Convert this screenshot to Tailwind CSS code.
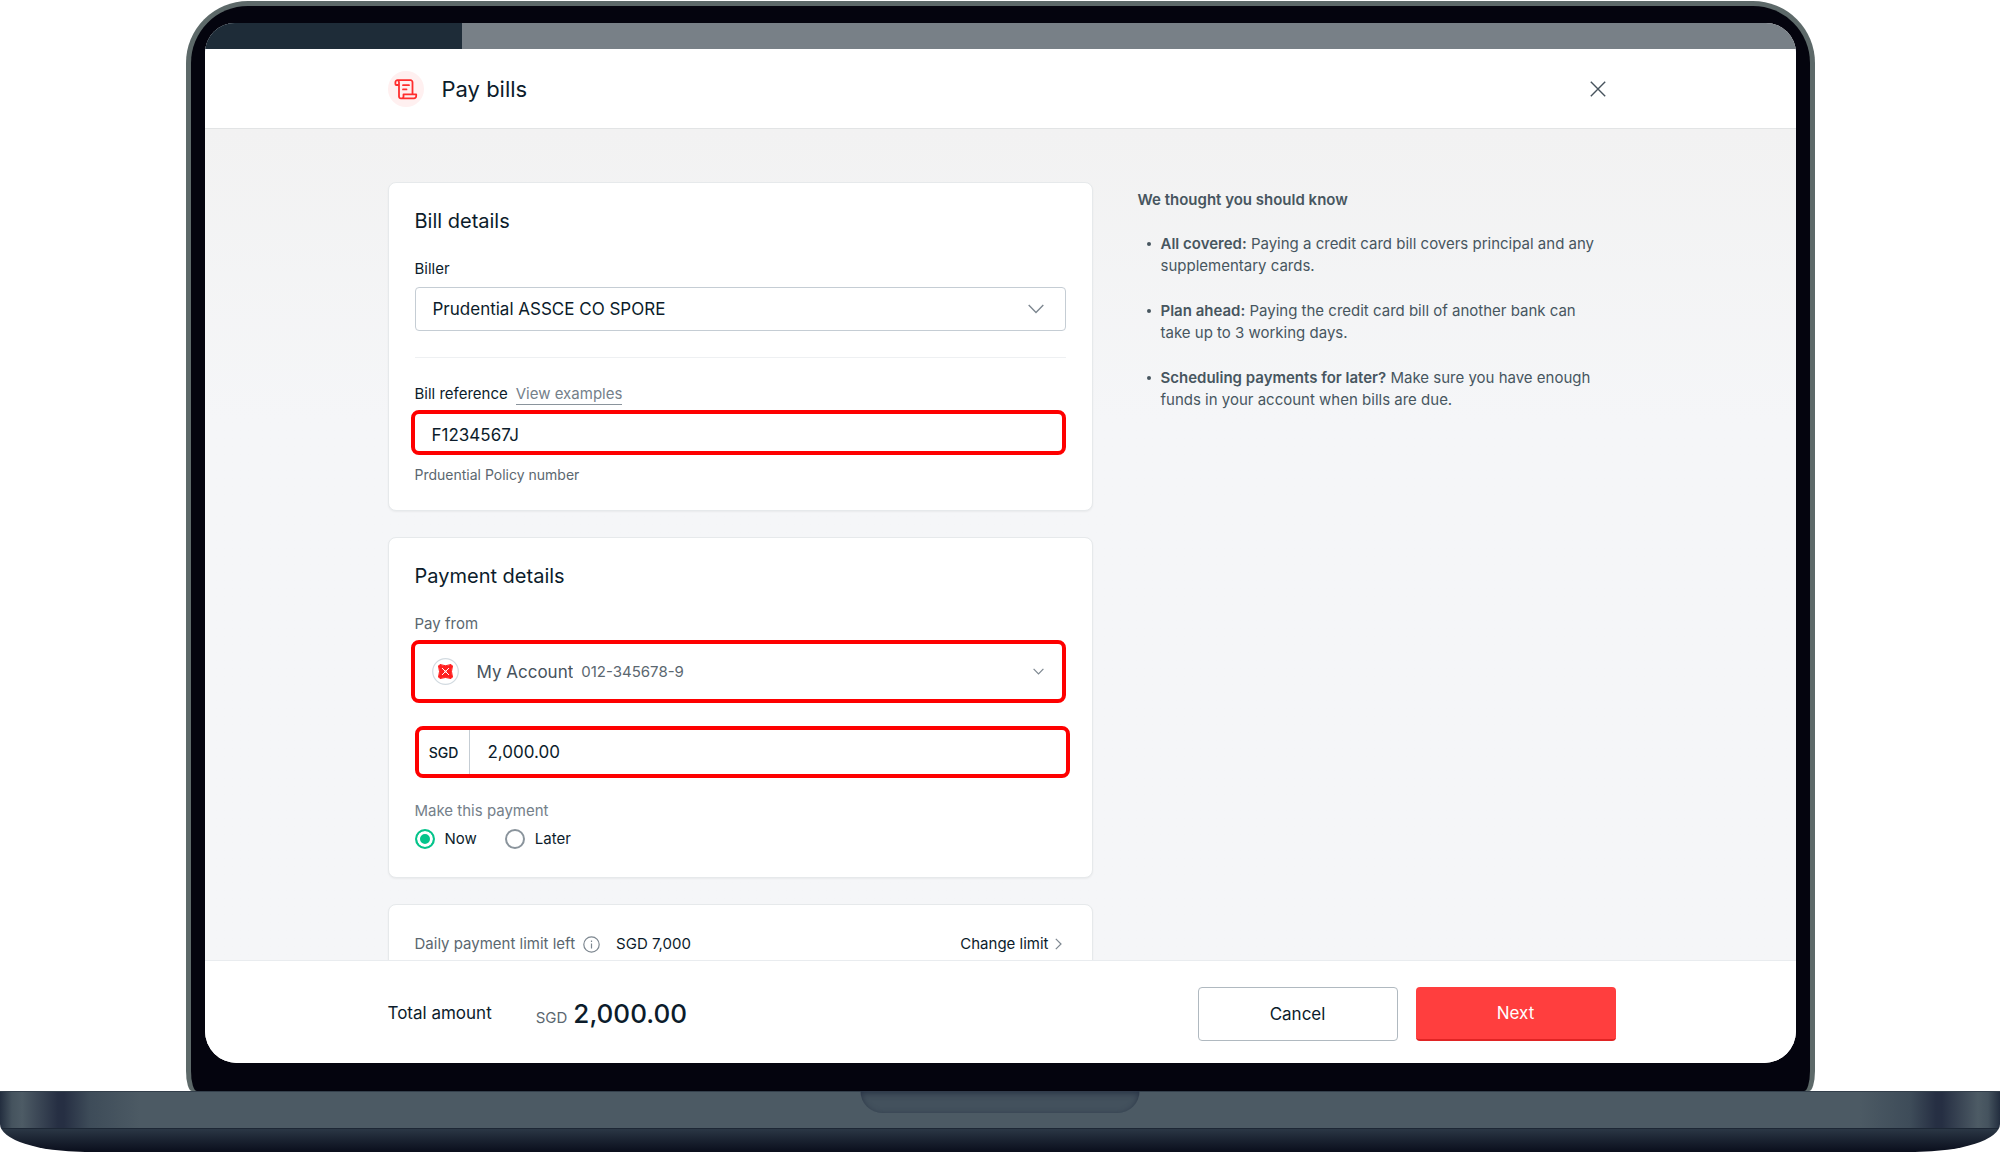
<!DOCTYPE html>
<html lang="en">
<head>
  <meta charset="UTF-8"/>
  <meta name="viewport" content="width=device-width, initial-scale=1.0"/>
  <title>Pay bills</title>
  <!-- TailwindCSS -->
  <script src="https://cdn.jsdelivr.net/npm/@tailwindcss/browser@4"></script>
</head>
<body class="bg-white text-[#0c1c2b] font-['Inter','Liberation_Sans',sans-serif]">
<div class="h-screen flex flex-col overflow-hidden">

  <!-- Laptop lid -->
  <div class="flex-1 min-h-0 ml-[186px] mr-[185px] mt-px px-[5px] pt-[5px] rounded-t-[62px] rounded-b-[6px_20px] bg-[#5d6969]">
    <div class="h-full rounded-t-[57px] rounded-b-[6px_20px] bg-[#04040e] px-[14px] pt-[17px] pb-7">

      <!-- Screen -->
      <div class="h-full flex flex-col overflow-hidden rounded-t-[30px] rounded-b-[32px] bg-white">
        <div class="h-[26px] shrink-0 flex bg-[#788087]">
          <div class="w-[257px] bg-[#1e2c38]"></div>
        </div>

        <!-- Header -->
        <header class="h-[80px] shrink-0 border-b border-[#e2e4e5] bg-white">
          <div class="h-full w-full max-w-[1230px] pl-0.5 mx-auto flex items-center">
            <span class="size-9 rounded-full bg-[#fff0f0] flex items-center justify-center">
              <svg class="size-6" viewBox="0 0 24 24" fill="none" stroke="#ff2d2d" stroke-width="1.8" stroke-linecap="round" stroke-linejoin="round">
                <path d="M5 8H2.4A1 1 0 0 1 1.400 7V5.200A2 2 0 0 1 3.400 3.200H16.500A2 2 0 0 1 18.500 5.200V16.500M3.400 3.200A2 2 0 0 1 5 5.200V19.500A1.800 1.800 0 0 0 6.800 21.300H20A2.200 2.200 0 0 0 22.200 19V17.300H9.500V19.500A1.800 1.800 0 0 1 7.700 21.300M9 8.200H15M9 12.400H12.500"/>
              </svg>
            </span>
            <h1 class="ml-[18px] text-[22px] leading-7">Pay bills</h1>
            <button type="button" aria-label="Close" class="ml-auto size-9 flex items-center justify-center">
              <svg class="size-4" viewBox="0 0 16 16" fill="none" stroke="#47535d" stroke-width="1.4"><path d="M.8.8l14.400 14.400M15.200.8L.8 15.200"/></svg>
            </button>
          </div>
        </header>

        <!-- Content -->
        <main class="flex-1 min-h-0 overflow-hidden bg-linear-to-b from-[#f2f2f2] to-[#f5f6f8] to-35%">
          <div class="w-full max-w-[1230px] pl-0.5 mx-auto pt-[53px] flex gap-[45px]">
            <form id="pay" class="w-[705px] shrink-0 flex flex-col gap-[26px]">

              <section class="bg-white border border-[#e6e9eb] shadow-xs rounded-lg px-[26px] pt-6 pb-[23px]">
                <h2 class="text-[20px] leading-7">Bill details</h2>
                <label for="biller" class="block mt-[22px] text-[15px] leading-6">Biller</label>
                <div class="relative mt-1.5">
                  <select id="biller" class="w-full h-11 appearance-none border border-[#c5cdd4] rounded-sm pl-[17px] pt-0.5 text-[17px]">
                    <option>Prudential ASSCE CO SPORE</option>
                  </select>
                  <svg class="absolute right-[22px] top-[17px] w-4 h-[10px] pointer-events-none" viewBox="0 0 16 10" fill="none" stroke="#7d8790" stroke-width="1.4"><path d="M.7 1L8 8.500 15.300 1"/></svg>
                </div>
                <hr class="mt-[26px] border-[#eef0f2]">
                <div class="mt-6 flex items-center gap-2 text-[15px] leading-6">
                  <label for="ref">Bill reference</label>
                  <a href="#examples" class="text-[#74808a] border-b border-[#8a949c] leading-5">View examples</a>
                </div>
                <input id="ref" type="text" value="F1234567J" class="block mt-1 -ml-1 w-[calc(100%+4px)] h-[45px] border-4 border-[#fe0000] rounded-lg pl-[17px] pt-1 text-[17px]">
                <p class="mt-2 text-[14px] leading-6 text-[#5b6770]">Prduential Policy number</p>
              </section>

              <section class="bg-white border border-[#e6e9eb] shadow-xs rounded-lg px-[26px] pt-6 pb-[26px]">
                <h2 class="text-[20px] leading-7">Payment details</h2>
                <label for="account" class="block mt-[22px] text-[15px] leading-6 text-[#5b6770]">Pay from</label>
                <div class="mt-1 -ml-1 h-[63px] flex items-center border-4 border-[#fe0000] rounded-lg pl-[17px] pr-[18px] text-[#47535d]">
                  <svg class="size-[27px]" viewBox="0 0 27 27">
                    <circle cx="13.500" cy="13.500" r="12.800" fill="#fff" stroke="#d3dbe1" stroke-width="1.200"/>
                    <path d="M8 6.500Q13.500 9 19 6.500L20.500 8Q18.500 13.500 20.500 19L19 20.500Q13.500 18.500 8 20.500L6.500 19Q8.500 13.500 6.500 8Z" fill="#ff1f1f" stroke="#ff1f1f" stroke-linejoin="round"/>
                    <path d="M10 10l7 7M17 10l-7 7" stroke="#fff" stroke-width="1"/>
                    <circle cx="13.500" cy="13.500" r="1" fill="#fff"/>
                  </svg>
                  <select id="account" class="appearance-none field-sizing-content ml-[18px] pt-0.5 text-[17px]">
                    <option>My Account</option>
                  </select>
                  <span class="ml-2 pt-0.5 text-[15px] text-[#5b6770]">012-345678-9</span>
                  <svg class="ml-auto w-[11px] h-[7px]" viewBox="0 0 11 7" fill="none" stroke="#7d8790" stroke-width="1.200"><path d="M.6.8L5.500 5.800 10.400.8"/></svg>
                </div>
                <div class="mt-[23px] -mr-1 h-[52px] flex border-4 border-[#fe0000] rounded-lg">
                  <label for="amount" class="w-[51px] flex items-center justify-center border-r border-[#c5cdd4] text-[14px] font-medium">SGD</label>
                  <input id="amount" type="text" value="2,000.00" class="flex-1 min-w-0 pl-[18px] pt-0.5 text-[17px]">
                </div>
                <fieldset class="mt-[21px] text-[15px] leading-6">
                  <legend class="text-[#74808a]">Make this payment</legend>
                  <div class="mt-1 flex gap-7">
                    <label class="flex items-center gap-2.5">
                      <input type="radio" name="when" checked class="appearance-none size-5 rounded-full border-2 border-[#8a949c] checked:border-[#05c48b] checked:bg-[#05c48b] checked:shadow-[inset_0_0_0_3px_white]">
                      Now
                    </label>
                    <label class="flex items-center gap-2.5">
                      <input type="radio" name="when" class="appearance-none size-5 rounded-full border-2 border-[#8a949c] checked:border-[#05c48b] checked:bg-[#05c48b] checked:shadow-[inset_0_0_0_3px_white]">
                      Later
                    </label>
                  </div>
                </fieldset>
              </section>

              <section class="bg-white border border-[#e6e9eb] shadow-xs rounded-lg px-[26px] pt-[27px] pb-7">
                <div class="flex items-center text-[15px] leading-6">
                  <span class="text-[#5b6770]">Daily payment limit left</span>
                  <svg class="ml-2 size-[17px]" viewBox="0 0 17 17" fill="none" stroke="#7d8790" stroke-width="1.200"><circle cx="8.500" cy="8.500" r="7.700"/><path d="M8.500 7.500v5M8.500 4.500v1.400"/></svg>
                  <span class="ml-4">SGD 7,000</span>
                  <a href="#limit" class="ml-auto mr-1 flex items-center gap-1.5">Change limit
                    <svg class="w-[7px] h-3" viewBox="0 0 7 12" fill="none" stroke="#7d8790" stroke-width="1.200"><path d="M.8.8L6 6 .8 11.200"/></svg>
                  </a>
                </div>
              </section>
            </form>

            <!-- Tips -->
            <aside class="flex-1 mt-[7px] text-[15px] leading-[22px] text-[#47565f]">
              <h3 class="font-semibold">We thought you should know</h3>
              <ul class="mt-[22px] ml-[23px] w-[440px] flex flex-col gap-[23px]">
                <li class="relative before:absolute before:-left-[14px] before:top-[9px] before:size-1 before:rounded-full before:bg-[#47565f]"><b class="font-semibold">All covered:</b> Paying a credit card bill covers principal and any<br>supplementary cards.</li>
                <li class="relative before:absolute before:-left-[14px] before:top-[9px] before:size-1 before:rounded-full before:bg-[#47565f]"><b class="font-semibold">Plan ahead:</b> Paying the credit card bill of another bank can<br>take up to 3 working days.</li>
                <li class="relative before:absolute before:-left-[14px] before:top-[9px] before:size-1 before:rounded-full before:bg-[#47565f]"><b class="font-semibold">Scheduling payments for later?</b> Make sure you have enough<br>funds in your account when bills are due.</li>
              </ul>
            </aside>
          </div>
        </main>

        <!-- Footer -->
        <footer class="shrink-0 border-t border-[#e9ecef] bg-white pt-[26px] pb-[22px]">
          <div class="w-full max-w-[1230px] pl-0.5 mx-auto flex items-center">
            <span class="text-[17px]">Total amount</span>
            <p class="ml-11 flex items-baseline gap-1.5">
              <span class="text-[15px] text-[#5b6770]">SGD</span>
              <strong class="text-[26px] leading-8 font-medium">2,000.00</strong>
            </p>
            <button type="button" class="ml-auto w-[200px] h-[54px] border border-[#b0b9c0] rounded-sm pt-0.5 text-[17px]">Cancel</button>
            <button type="submit" form="pay" class="ml-[18px] w-[200px] h-[54px] rounded-sm bg-[#ff3e3e] border-b-2 border-[#e02424] pt-0.5 text-[17px] text-white">Next</button>
          </div>
        </footer>
      </div>
    </div>
  </div>

  <!-- Laptop base -->
  <div class="h-[61px] shrink-0 relative overflow-hidden rounded-b-[85px_28px]">
    <div class="h-[37px] border-t border-[#333f4b] bg-[linear-gradient(90deg,#232e3f_0,#45535e_12px,#4d5b65_22px,#262f43_58px,#262f43_64px,#3e4c59_90px,#4c5a64_140px,#4c5a64_calc(100%-140px),#3e4c59_calc(100%-90px),#262f43_calc(100%-64px),#262f43_calc(100%-58px),#4d5b65_calc(100%-22px),#45535e_calc(100%-12px),#232e3f_100%)]"></div>
    <div class="h-6 border-t border-[#1d2735] bg-linear-to-b from-[#2b3745] to-[#0a0e1c]"></div>
    <div class="absolute top-0 left-1/2 -translate-x-1/2 w-[279px] h-[22px] rounded-b-[22px] bg-[#43515d] shadow-[inset_0_2px_6px_#263143]"></div>
  </div>
</div>
</body>
</html>
